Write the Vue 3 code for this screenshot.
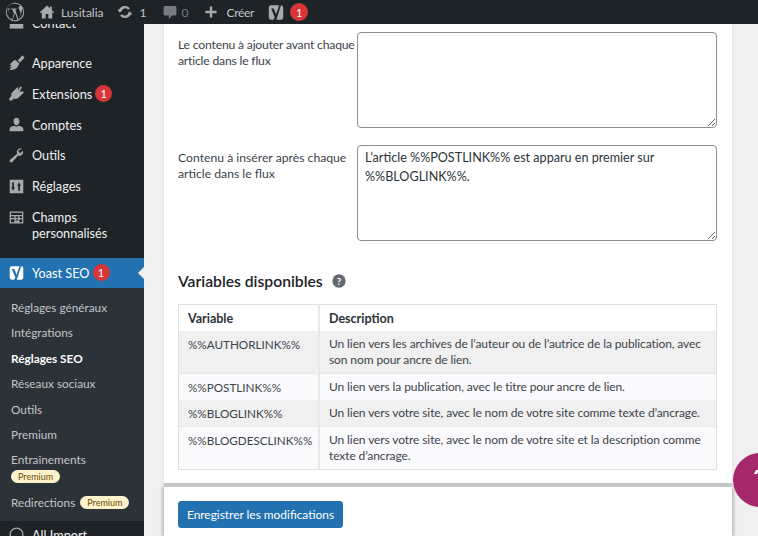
<template>
  <div class="page">
    <div class="adminbar">
      <svg class="wp-logo" viewBox="0 0 20 20"><path d="M10 .8a9.200 9.200 0 1 0 0 18.400A9.200 9.200 0 0 0 10 .8zm0 1a8.200 8.200 0 0 1 5.600 2.200c-1.100-.1-2 .8-2 1.800 0 .9.500 1.600 1.100 2.500.4.800.8 1.700.8 3 0 .9-.3 2-.8 3.400l-1 3.300-3.500-10.500c.6 0 1.100-.1 1.100-.1.500-.1.500-.8 0-.8 0 0-1.500.1-2.400.1S6.500 6.600 6.500 6.600c-.5 0-.6.800 0 .8 0 0 .5.100 1 .1l1.500 4.100-2.100 6.300-3.500-10.400c.6 0 1.100-.1 1.100-.1.500-.1.500-.8 0-.8 0 0-1.500.1-2.400.1h-.4A8.200 8.200 0 0 1 10 1.800zM2.600 6.500l4.500 11.200A8.200 8.200 0 0 1 2.600 6.500zm7.500 4.400 2.400 6.900a8.200 8.200 0 0 1-5 .1zm7-4.800a8.200 8.200 0 0 1-3 11l2.500-7.200c.5-1.200.6-2.100.6-2.900 0-.3 0-.6-.1-.9z" /></svg>
      <svg class="bar-icon home" viewBox="0 0 20 20"><path d="M10 2 .8 10.500l1 1.100L3.500 10.200V18h4.800v-5.500h3.400V18h4.800v-7.800l1.700 1.400 1-1.100-3.200-3V3h-2.500v2.200z" /></svg>
      <span class="bar-text site">Lusitalia</span>
      <svg class="bar-icon update" viewBox="0 0 20 20">
        <path class="ring" d="M3.800 8.500A6.500 6.500 0 0 1 15 6.200" />
        <path class="ring" d="M16.200 11.500A6.500 6.500 0 0 1 5 13.800" />
        <path d="M.5 7h6.800L3.500 11zM12.700 13h6.800l-3.800-4z" />
      </svg>
      <span class="bar-count">1</span>
      <svg class="bar-icon comment" viewBox="0 0 20 20"><path d="M4 2.500h12A2 2 0 0 1 18 4.500v8a2 2 0 0 1-2 2h-3.500L8.500 19v-4.500H4a2 2 0 0 1-2-2v-8a2 2 0 0 1 2-2z" /></svg>
      <span class="bar-count dim">0</span>
      <svg class="bar-icon plus" viewBox="0 0 20 20"><path d="M8.500 3h3v5.500H17v3h-5.500V17h-3v-5.500H3v-3h5.500z" /></svg>
      <span class="bar-text create">Créer</span>
      <svg class="yoast-bar" viewBox="0 0 20 20"><path class="mark" :d="yoastPath" /><path class="slash" d="M16 -1 9.500 20" /></svg>
      <span class="badge">1</span>
    </div>

    <div class="layout">
      <nav class="sidebar">
        <ul class="menu">
          <li class="item contact">
            <span class="icon-box"><svg class="mi" viewBox="0 0 20 20"><path d="M2 4h16v12H2z" /></svg></span>
            <span>Contact</span>
          </li>
          <li v-for="item in mainItems" :key="item.label" class="item" :class="item.cls">
            <span class="icon-box"><svg class="mi" viewBox="0 0 20 20"><path :d="item.icon" /></svg></span>
            <span class="item-label">{{ item.label }}</span>
            <span v-if="item.badge" class="badge side">{{ item.badge }}</span>
          </li>
          <li class="item active">
            <span class="icon-box">
              <svg class="mi yoast-side" viewBox="0 0 20 20"><path :d="yoastPath" /><path class="slash" d="M16 -1 9.500 20" /></svg>
            </span>
            <span class="item-label">Yoast SEO</span>
            <span class="badge side">1</span>
            <span class="arrow"></span>
          </li>
        </ul>
        <ul class="submenu">
          <li>Réglages généraux</li>
          <li>Intégrations</li>
          <li class="current">Réglages SEO</li>
          <li>Réseaux sociaux</li>
          <li>Outils</li>
          <li>Premium</li>
          <li class="stacked">Entraînements<span class="pill">Premium</span></li>
          <li class="inline">Redirections<span class="pill">Premium</span></li>
        </ul>
        <div class="item last">
          <span class="icon-box"><svg class="mi" viewBox="0 0 20 20"><circle cx="10" cy="10" r="7.500" fill="none" stroke="#a7aaad" stroke-width="1.500" /></svg></span>
          <span>All Import</span>
        </div>
      </nav>

      <main class="content">
        <section class="card top">
          <div class="field first">
            <label>Le contenu à ajouter avant chaque<br />article dans le flux</label>
            <textarea class="input" readonly></textarea>
          </div>
          <div class="field">
            <label>Contenu à insérer après chaque<br />article dans le flux</label>
            <textarea class="input" readonly :value="afterText"></textarea>
          </div>
          <h2 class="vars-title">
            Variables disponibles
            <svg class="help" viewBox="0 0 20 20"><circle cx="10" cy="10" r="9.500" fill="#646970" /><text x="10" y="15" text-anchor="middle" font-size="14" font-weight="700" font-family="Lato, sans-serif" fill="#fff">?</text></svg>
          </h2>
          <table class="vars">
            <thead>
              <tr><th class="col-name">Variable</th><th>Description</th></tr>
            </thead>
            <tbody>
              <tr v-for="row in rows" :key="row.name">
                <td class="col-name">{{ row.name }}</td>
                <td>{{ row.desc }}</td>
              </tr>
            </tbody>
          </table>
        </section>
        <section class="card bottom">
          <button class="save">Enregistrer les modifications</button>
        </section>
        <div class="bubble"><span class="bubble-mark"></span></div>
      </main>
    </div>
  </div>
</template>

<script setup>
const afterText = 'L’article %%POSTLINK%% est apparu en premier sur %%BLOGLINK%%.'

const yoastPath = 'M4.500 2.500h9L12.400 6 10 12.500 7.500 6H4.600l4 9.800L7.200 18.500H4.500A2.500 2.500 0 0 1 2 16V5a2.500 2.500 0 0 1 2.500-2.500zM15.200 2.500h.3A2.500 2.500 0 0 1 18 5v11a2.500 2.500 0 0 1-2.500 2.500H9.800z'

const mainItems = [
  { label: 'Apparence', icon: 'M17 1.500 19.500 4.500 14 10l-2.500-2.500zM10.500 8.500l3 3-1.500 2c-.5 2-2 3.500-4 4.500l-6.500 1 3-3.500-3 .5 3-3.500-3 .5 3.500-3.500C6 7.500 8 7 9.500 7.500z' },
  { label: 'Extensions', icon: 'M14.500 1.500 16.500 3 13.500 7.500H18l.5 1.500-7 6.500c-1.500 1-3 1-4.500.5L4 18.500 1.500 18 1.500 15.500 4 13c-.5-1.500 0-3.500 1-4.500L11 2.500l1 .5v3.500z', badge: '1' },
  { label: 'Comptes', icon: 'M10 2c2 0 3.500 1.800 3.500 4.200S12 11 10 11 6.500 8.600 6.500 6.200 8 2 10 2zM7 11.500c1.800 1.200 4.200 1.200 6 0 2.800.5 5 2 5 3.500v3H2v-3c0-1.500 2.200-3 5-3.500z' },
  { label: 'Outils', icon: 'M16.500 2.200c-2-.8-4.500-.2-5.500 1.500-.8 1.300-.7 2.800 0 4L2.500 15c-.8.8-.8 2 0 2.700s1.900.7 2.600 0L12 10c1.300.6 2.800.6 4-.3 1.600-1.100 2.200-3.300 1.500-5.200L15 7l-2.200-.7-.5-2.200z' },
  { label: 'Réglages', icon: 'M2 2h16v16H2zM5 5v6H3.800L6 15l2.200-4H7V5zM13 5l-2.200 4H12v6h2V9h1.200z' },
  { label: 'Champs personnalisés', cls: 'wrap', icon: 'M2 3h16v14H2zM3.500 4.500V7h13V4.500zM3.500 8.500v2h4v-2zM9 8.500v2h3v-2zM13.500 8.500v2h3v-2zM3.500 12v3.500h4V12zM9 12v1.500h3V12zM13.500 12v3.500h3V12z' }
]

const rows = [
  { name: '%%AUTHORLINK%%', desc: 'Un lien vers les archives de l’auteur ou de l’autrice de la publication, avec son nom pour ancre de lien.' },
  { name: '%%POSTLINK%%', desc: 'Un lien vers la publication, avec le titre pour ancre de lien.' },
  { name: '%%BLOGLINK%%', desc: 'Un lien vers votre site, avec le nom de votre site comme texte d’ancrage.' },
  { name: '%%BLOGDESCLINK%%', desc: 'Un lien vers votre site, avec le nom de votre site et la description comme texte d’ancrage.' }
]
</script>

<style>
html, body {
  margin: 0;
  overflow: hidden;
}
</style>

<style scoped>
.page {
  position: relative;
  width: 758px;
  height: 536px;
  overflow: hidden;
  background: #f0f0f1;
  font-family: Lato, "Noto Sans", sans-serif;
  font-size: 12px;
  color: #3c434a;
}

.adminbar {
  position: absolute;
  top: 0;
  left: 0;
  right: 0;
  height: 24px;
  z-index: 5;
  background: #1d2327;
  display: flex;
  align-items: center;
  color: #c3c4c7;
  font-size: 12px;
}

.wp-logo {
  width: 20px;
  height: 20px;
  margin-left: 5px;
  fill: #a7aaad;
  fill-rule: evenodd;
  flex: none;
}

.bar-icon {
  width: 16px;
  height: 16px;
  fill: #a7aaad;
  flex: none;
}

.bar-icon.home {
  margin-left: 14px;
}

.bar-text.site {
  margin-left: 6px;
}

.bar-icon.update {
  margin-left: 13px;
}

.ring {
  fill: none;
  stroke: #a7aaad;
  stroke-width: 3px;
}

.bar-count {
  margin-left: 7px;
}

.bar-count.dim {
  margin-left: 4px;
  color: #787c82;
}

.bar-icon.comment {
  margin-left: 15px;
  fill: #787c82;
}

.bar-icon.plus {
  margin-left: 15px;
}

.bar-text.create {
  margin-left: 7px;
  letter-spacing: -0.3px;
}

.yoast-bar {
  width: 18px;
  height: 18px;
  margin-left: 13px;
  overflow: visible;
  flex: none;
}

.yoast-bar .mark {
  fill: #a7aaad;
}

.slash {
  stroke: #1d2327;
  stroke-width: 1px;
  fill: none;
}

.active .slash {
  stroke: #2271b1;
}

.badge {
  display: inline-flex;
  align-items: center;
  justify-content: center;
  width: 18px;
  height: 18px;
  margin-left: 5px;
  border-radius: 50%;
  background: #d63638;
  color: #fff;
  font-size: 11px;
}

.badge.side {
  width: 17px;
  height: 17px;
  margin-left: 3px;
  flex: none;
}

.layout {
  display: flex;
  height: 536px;
}

.sidebar {
  width: 144px;
  flex: none;
  height: 536px;
  background: #1d2327;
  color: #f0f0f1;
  overflow: hidden;
  font-size: 12.700px;
}

.menu,
.submenu {
  list-style: none;
  margin: 0;
  padding: 0;
}

.item {
  display: flex;
  align-items: center;
  height: 30.800px;
  position: relative;
}

.item.contact {
  height: 30px;
  margin-top: 8px;
  margin-bottom: 9.600px;
}

.item.wrap {
  height: 47.600px;
  align-items: flex-start;
  padding-top: 7.400px;
  box-sizing: border-box;
  line-height: 16px;
}

.icon-box {
  width: 32px;
  flex: none;
  display: flex;
  justify-content: center;
}

.mi {
  width: 17px;
  height: 17px;
  fill: #a7aaad;
  fill-rule: evenodd;
}

.item.active {
  background: #2271b1;
  color: #fff;
  margin-top: 8.800px;
  height: 30px;
}

.yoast-side {
  fill: #fff;
  overflow: visible;
}

.arrow {
  position: absolute;
  right: 0;
  top: 9px;
  border: 6.500px solid transparent;
  border-right-color: #f0f0f1;
  border-left: 0;
}

.submenu {
  background: #2c3338;
  color: #c3c4c7;
  padding-top: 7px;
  height: 233px;
  box-sizing: border-box;
  font-size: 11.800px;
}

.submenu li {
  height: 25.400px;
  line-height: 25px;
  padding-left: 11px;
}

.submenu li.current {
  color: #fff;
  font-weight: 700;
}

.submenu li.stacked {
  height: 42px;
  display: flex;
  flex-direction: column;
  align-items: flex-start;
}

.submenu li.stacked .pill {
  margin-left: 0;
  margin-top: -2px;
}

.submenu li.inline {
  display: flex;
  align-items: center;
}

.pill {
  display: inline-block;
  margin-left: 5px;
  padding: 0 7px;
  height: 13px;
  line-height: 13px;
  border-radius: 7px;
  background: #fff3cd;
  color: #674e00;
  font-size: 9px;
  font-weight: 400;
}

.item.last {
  height: 28px;
  color: #f0f0f1;
}

.content {
  flex: 1;
  position: relative;
  padding: 0 26px 0 20px;
  min-width: 0;
}

.card {
  background: #fff;
  padding: 0 14px;
  box-sizing: border-box;
}

.card.top {
  height: 483px;
  padding-top: 32px;
  box-shadow: 0 0 2px rgba(0, 0, 0, 0.08);
}

.card.bottom {
  height: 49px;
  margin-top: 4px;
  padding-top: 14px;
  box-shadow: 0 -4px 0 #c6c6c6, 0 0 4px 1px rgba(0, 0, 0, 0.3);
}

.field {
  display: flex;
  margin-bottom: 17px;
}

.field label {
  width: 179px;
  flex: none;
  font-size: 12.200px;
  line-height: 16px;
  padding-top: 5px;
  box-sizing: border-box;
  white-space: nowrap;
}

.field.first label {
  letter-spacing: -0.2px;
}

.input {
  width: 360px;
  height: 96px;
  box-sizing: border-box;
  margin: 0;
  padding: 2px 7px;
  border: 1px solid #8c8f94;
  border-radius: 4px;
  background: #fff;
  font: 12.600px/19px Lato, "Noto Sans", sans-serif;
  color: #2c3338;
  outline: none;
}

.vars-title {
  margin: 30px 0 13px;
  font-size: 15.700px;
  line-height: 20px;
  font-weight: 600;
  color: #1d2327;
  display: flex;
  align-items: center;
}

.help {
  width: 14px;
  height: 14px;
  margin-left: 9px;
}

.vars {
  width: 539px;
  border-collapse: collapse;
  table-layout: fixed;
  border: 1px solid #e0e0e0;
  line-height: 16px;
}

.vars th {
  text-align: left;
  padding: 6px 9px 4px;
  font-weight: 700;
  font-size: 12.500px;
  color: #2c3338;
  background: #fff;
}

.vars td {
  padding: 5px 9px;
  vertical-align: top;
  letter-spacing: -0.1px;
}

.vars td.col-name {
  font-size: 11.700px;
  letter-spacing: 0;
}

.vars tbody tr:nth-child(even) td {
  border-top: 1px solid #e8e8e8;
}

.vars th + th,
.vars td + td {
  border-left: 2px solid #e8e8e8;
}

.col-name {
  width: 121px;
}

.vars tbody tr:nth-child(odd) {
  background: #f0f0f1;
}

.vars tbody tr:nth-child(even) {
  background: #fafafc;
}

.save {
  display: block;
  width: 165px;
  height: 27px;
  padding: 0;
  border: 1px solid #2271b1;
  border-radius: 3px;
  background: #2271b1;
  color: #fff;
  font: 11.900px Lato, "Noto Sans", sans-serif;
}

.bubble {
  position: absolute;
  left: 589px;
  top: 453px;
  width: 54px;
  height: 54px;
  border-radius: 50%;
  background: #a4286a;
}

.bubble-mark {
  position: absolute;
  left: 22px;
  top: 17px;
  width: 3px;
  height: 4px;
  background: #fff;
  transform: skewX(-30deg);
}
</style>
